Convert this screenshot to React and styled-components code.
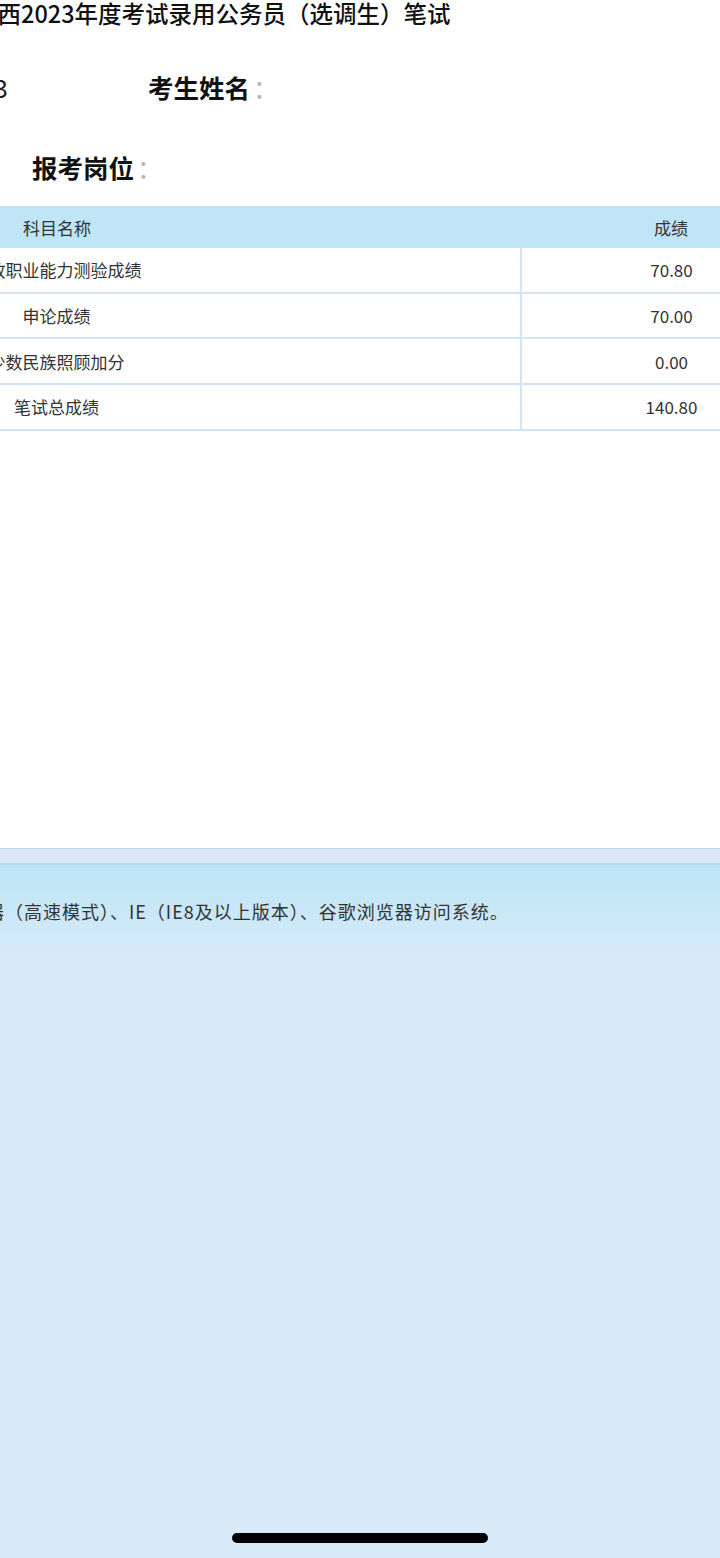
import React from 'react';
import styled, { createGlobalStyle } from 'styled-components';

// score rows, the page is seen cropped on both sides
const SCORES = [
  { name: '行政职业能力测验成绩', score: '70.80' },
  { name: '申论成绩', score: '70.00' },
  { name: '少数民族照顾加分', score: '0.00' },
  { name: '笔试总成绩', score: '140.80' },
];

const GlobalStyle = createGlobalStyle`
  html, body {
    margin: 0;
    padding: 0;
    width: 720px;
    height: 1558px;
    overflow: hidden;
    background: #d8eaf8;
  }
  #root {
    height: 100%;
  }
`;

const App = () => (
  <>
    <GlobalStyle />
    <Screen>
      <Main>
        <Title>广西2023年度考试录用公务员（选调生）笔试</Title>

        <InfoRow>
          <InfoCell $shift={-300} $width={308} $align="right">
            <Value>4520230103</Value>
          </InfoCell>
          <InfoCell $shift={140}>
            <Label>考生姓名</Label><Colon>：</Colon>
          </InfoCell>
        </InfoRow>

        <InfoRow $gap={40}>
          <InfoCell $shift={32}>
            <Label>报考岗位</Label><Colon>：</Colon>
          </InfoCell>
        </InfoRow>

        <Table>
          <thead>
            <tr>
              <HeadCell $width={928}>科目名称</HeadCell>
              <HeadCell $width={300}>成绩</HeadCell>
            </tr>
          </thead>
          <tbody>
            {SCORES.map(row => (
              <Row key={row.name}>
                <Cell $divider>{row.name}</Cell>
                <Cell>{row.score}</Cell>
              </Row>
            ))}
          </tbody>
        </Table>
      </Main>

      <Band />

      <Footer>
        <Notice>浏览器（高速模式）、IE（IE8及以上版本）、谷歌浏览器访问系统。</Notice>
      </Footer>

      <HomeBar />
    </Screen>
  </>
);

export default App;

const Screen = styled.div`
  display: flex;
  flex-direction: column;
  height: 1558px;
  font-family: "Noto Sans CJK SC", "Liberation Sans", sans-serif;
  color: #222;
`;

const Main = styled.div`
  height: 848px;
  background: #fff;
`;

const Title = styled.div`
  margin-left: -26px;
  font-size: 23.5px;
  font-weight: 500;
  line-height: 26px;
  height: 26px;
  white-space: nowrap;
  color: #111;
`;

const InfoRow = styled.div`
  display: flex;
  align-items: center;
  height: 40px;
  margin-top: ${p => p.$gap ?? 40}px;
  white-space: nowrap;
`;

const InfoCell = styled.div`
  margin-left: ${p => p.$shift}px;
  width: ${p => (p.$width ? `${p.$width}px` : 'auto')};
  text-align: ${p => p.$align || 'left'};
  font-size: 25.5px;
`;

const Label = styled.span`
  font-weight: 700;
  color: #111;
`;

const Colon = styled.span`
  margin-left: 3px;
  color: #b5b5b5;
  font-weight: 400;
`;

const Value = styled.span`
  color: #222;
`;

const Table = styled.table`
  margin-top: 20px;
  margin-left: -407px;
  width: 1228px;
  border-collapse: collapse;
  table-layout: fixed;
  font-size: 17px;
  color: #333;
`;

const HeadCell = styled.th`
  width: ${p => p.$width}px;
  height: 42px;
  padding: 0;
  background: #bfe5f6;
  font-weight: 400;
  text-align: center;
`;

const Row = styled.tr`
  border-bottom: 2px solid #d2e5f5;
`;

const Cell = styled.td`
  height: 43.7px;
  padding: 0;
  text-align: center;
  white-space: nowrap;
  border-right: ${p => (p.$divider ? '2px solid #d2e5f5' : 'none')};
`;

const Band = styled.div`
  height: 14px;
  border-top: 1px solid #b9d9ee;
  border-bottom: 2px solid #b4dcf0;
  background: #dce7f8;
`;

const Footer = styled.div`
  flex: 1;
  background: linear-gradient(to bottom, #bce5f6 0px, #d8eaf8 95px, #d8eaf8 100%);
`;

const Notice = styled.div`
  margin-top: 33px;
  margin-left: -52px;
  font-size: 18px;
  letter-spacing: 1px;
  line-height: 26px;
  white-space: nowrap;
  color: #333;
`;

const HomeBar = styled.div`
  position: fixed;
  left: 232px;
  bottom: 15px;
  width: 256px;
  height: 10px;
  border-radius: 5px;
  background: #000;
`;
